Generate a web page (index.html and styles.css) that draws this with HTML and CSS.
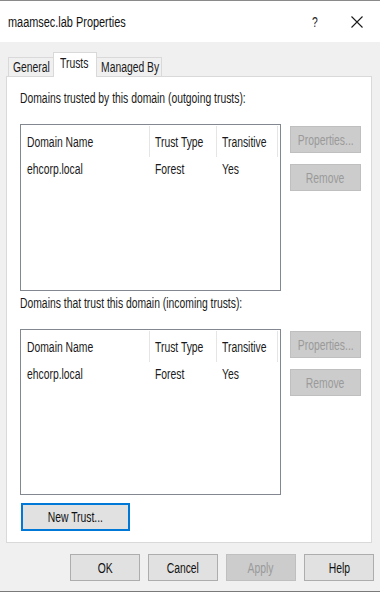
FILE: index.html
```html
<!DOCTYPE html>
<html>
<head>
<meta charset="utf-8">
<link rel="stylesheet" href="styles.css">
</head>
<body>
<div class="window">
  <div class="titlebar">
    <span class="title"><span class="t">maamsec.lab Properties</span></span>
    <span class="help-q"><span class="t">?</span></span>
    <svg class="close-x" width="12" height="12" viewBox="0 0 12 12"><path d="M0.5 0.5 L11.5 11.5 M11.5 0.5 L0.5 11.5" stroke="#1a1a1a" stroke-width="1.1" fill="none"/></svg>
  </div>
  <div class="content">
    <div class="tabs">
      <div class="tab tab-general"><span class="t">General</span></div>
      <div class="tab tab-active"><span class="t">Trusts</span></div>
      <div class="tab tab-managed"><span class="t">Managed By</span></div>
    </div>
    <div class="panel">
      <div class="label"><span class="t">Domains trusted by this domain (outgoing trusts):</span></div>
      <div class="section">
        <div class="listview">
          <div class="lv-head">
            <div class="col c1"><span class="t">Domain Name</span></div>
            <div class="col c2"><span class="t">Trust Type</span></div>
            <div class="col c3"><span class="t">Transitive</span></div>
          </div>
          <div class="lv-row">
            <div class="cell c1"><span class="t">ehcorp.local</span></div>
            <div class="cell c2"><span class="t">Forest</span></div>
            <div class="cell c3"><span class="t">Yes</span></div>
          </div>
        </div>
        <div class="side">
          <div class="btn disabled"><span class="t tc">Properties...</span></div>
          <div class="btn disabled"><span class="t tc">Remove</span></div>
        </div>
      </div>
      <div class="label label2"><span class="t">Domains that trust this domain (incoming trusts):</span></div>
      <div class="section">
        <div class="listview lv2">
          <div class="lv-head">
            <div class="col c1"><span class="t">Domain Name</span></div>
            <div class="col c2"><span class="t">Trust Type</span></div>
            <div class="col c3"><span class="t">Transitive</span></div>
          </div>
          <div class="lv-row">
            <div class="cell c1"><span class="t">ehcorp.local</span></div>
            <div class="cell c2"><span class="t">Forest</span></div>
            <div class="cell c3"><span class="t">Yes</span></div>
          </div>
        </div>
        <div class="side">
          <div class="btn disabled"><span class="t tc">Properties...</span></div>
          <div class="btn disabled"><span class="t tc">Remove</span></div>
        </div>
      </div>
      <div class="btn newtrust"><span class="t tc">New Trust...</span></div>
    </div>
    <div class="footer">
      <div class="btn fbtn"><span class="t tc">OK</span></div>
      <div class="btn fbtn"><span class="t tc">Cancel</span></div>
      <div class="btn fbtn disabled"><span class="t tc">Apply</span></div>
      <div class="btn fbtn"><span class="t tc">Help</span></div>
    </div>
  </div>
</div>
</body>
</html>
```
FILE: styles.css
```css
html, body {
  margin: 0;
  padding: 0;
  background: #ffffff;
}
body {
  width: 380px;
  height: 594px;
  overflow: hidden;
  font-family: "Liberation Sans", Arial, sans-serif;
  font-size: 14px;
  color: #1a1a1a;
}
.t {
  display: inline-block;
  white-space: nowrap;
  transform: scaleX(0.74);
  transform-origin: left center;
}
.tc {
  transform-origin: center center;
}
.window {
  width: 380px;
  height: 592px;
  border-top: 1px solid #8a8a8a;
  border-bottom: 1px solid #7a7a7a;
  box-sizing: border-box;
  display: flex;
  flex-direction: column;
}
.titlebar {
  height: 41px;
  background: #ffffff;
  display: flex;
  align-items: center;
}
.title {
  margin-left: 8px;
  font-size: 14px;
  color: #111;
  flex: 1;
}
.title .t {
  transform: scaleX(0.78);
}
.help-q {
  font-size: 14px;
  width: 10px;
  margin-right: 29px;
  color: #222;
}
.close-x {
  margin-right: 17px;
}
.content {
  flex: 1;
  background: #f0f0f0;
  display: flex;
  flex-direction: column;
}
.tabs {
  display: flex;
  align-items: flex-end;
  height: 34px;
  padding-left: 8px;
  position: relative;
  z-index: 2;
}
.tab {
  height: 19px;
  line-height: 19px;
  padding: 0 0 0 4px;
  border: 1px solid #d9d9d9;
  border-bottom: none;
  background: #f0f0f0;
  box-sizing: border-box;
}
.tab-general { width: 46px; }
.tab-managed { width: 66px; margin-left: -1px; padding-left: 4px; }
.tab-active {
  height: 25px;
  line-height: 20px;
  width: 44px;
  background: #ffffff;
  margin-left: -1px;
  position: relative;
  top: 1px;
  padding-left: 6px;
  z-index: 1;
}
.panel {
  margin-left: 6px;
  width: 366px;
  height: 467px;
  box-sizing: border-box;
  background: #ffffff;
  border: 1px solid #d9d9d9;
  padding: 13px 0 0 13px;
  display: flex;
  flex-direction: column;
}
.label {
  height: 16px;
  line-height: 16px;
}
.label2 {
  margin-top: 4px;
}
.section {
  display: flex;
  gap: 9px;
  margin-top: 18px;
}
.listview {
  width: 261px;
  height: 167px;
  box-sizing: border-box;
  border: 1px solid #828790;
  background: #fff;
}
.lv2 {
  height: 166px;
}
.lv-head, .lv-row {
  display: flex;
}
.lv-head {
  height: 32px;
  align-items: stretch;
}
.col {
  display: flex;
  align-items: center;
  box-sizing: border-box;
  border-right: 1px solid #e5e5e5;
  margin-top: 1px;
}
.c1 { width: 129px; padding-left: 6px; }
.c2 { width: 67px; padding-left: 5px; }
.c3 { width: 61px; padding-left: 5px; }
.lv-row {
  height: 24px;
  align-items: center;
}
.cell {
  box-sizing: border-box;
}
.side {
  display: flex;
  flex-direction: column;
  gap: 11px;
  padding-top: 2px;
}
.btn {
  box-sizing: border-box;
  width: 71px;
  height: 27px;
  display: flex;
  align-items: center;
  justify-content: center;
  background: #e1e1e1;
  border: 1px solid #adadad;
  color: #111;
}
.btn.disabled {
  background: #cccccc;
  border-color: #bfbfbf;
  color: #9a9a9a;
}
.newtrust {
  margin-top: 8px;
  margin-left: 1px;
  width: 109px;
  height: 28px;
  border: 2px solid #0078d7;
}
.footer {
  display: flex;
  justify-content: flex-end;
  gap: 8px;
  padding-right: 6px;
  margin-top: 11px;
}
.fbtn {
  width: 70px;
}
```
